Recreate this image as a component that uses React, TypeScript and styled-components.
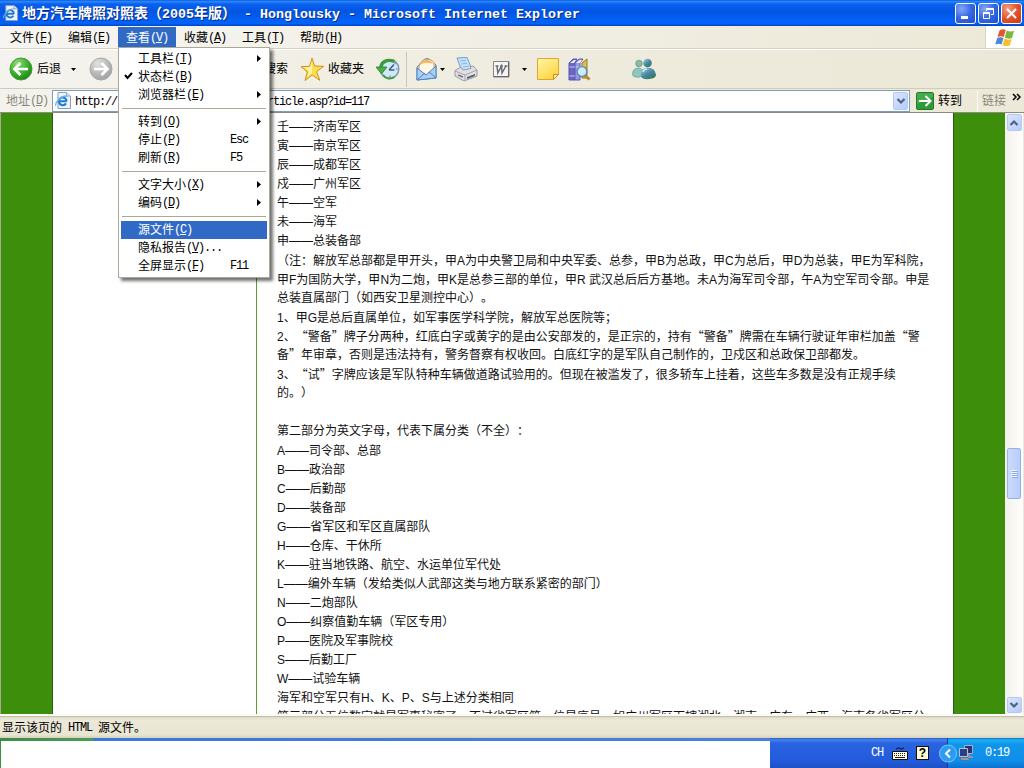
import React from 'react';
import styled, { createGlobalStyle, css } from 'styled-components';

const Global = createGlobalStyle`
  html, body { margin: 0; padding: 0; overflow: hidden; }
  * { box-sizing: border-box; }
  svg { display: block; flex: none; }
`;

const CJK = `"Noto Sans CJK SC", "Noto Sans", sans-serif`;

const Screen = styled.div`
  width: 1024px;
  height: 768px;
  display: flex;
  flex-direction: column;
  overflow: hidden;
  position: relative;
  background: #ece9d8;
  color: #000;
  font: 12px ${CJK};
  white-space: pre;
  text-spacing-trim: space-all;
`;

/* ---------- text ---------- */

const Mono = styled.span<{ $title?: boolean }>`
  font-family: "Liberation Mono", monospace;
  line-height: 1;
  ${(p) =>
    p.$title
      ? css`
          font-size: 13.33px;
        `
      : css`
          font-size: 12px;
          letter-spacing: -1.2px;
          vertical-align: 1px;
        `}
`;

const Arial = styled.span`
  font-family: "Liberation Sans", sans-serif;
`;

const Under = styled.span`
  text-decoration: underline;
  text-underline-offset: 1px;
`;

const runs = (text: string) => text.match(/[\x20-\x7e]+|[^\x20-\x7e]+/g) ?? [];
const articleRuns = (text: string) => text.match(/[\x20-\x7e—]+|[^\x20-\x7e—]+/g) ?? [];
const isLatin = (t: string) => /^[\x20-\x7e—]/.test(t);

const Ui = ({ children, title }: { children: string; title?: boolean }) => (
  <span>
    {runs(children).map((t, i) => {
      if (!isLatin(t)) return <span key={i}>{t}</span>;
      const key = t.match(/^\(([A-Z])\)(.*)$/);
      return (
        <Mono key={i} $title={title}>
          {key ? (
            <>
              (<Under>{key[1]}</Under>){key[2]}
            </>
          ) : (
            t
          )}
        </Mono>
      );
    })}
  </span>
);

/* ---------- title bar ---------- */

const TitleBar = styled.header`
  height: 26px;
  flex: none;
  display: flex;
  align-items: center;
  padding: 0 2px 0 3px;
  background: linear-gradient(#0a5be6 0, #2b86fb 6%, #0a60ee 16%, #0355e2 45%, #0360f6 75%, #0262fb 90%, #0144c4 100%);
`;

const Caption = styled.div`
  flex: 1;
  margin-left: 3px;
  padding-bottom: 1px;
  font-size: 14px;
  font-weight: 700;
  color: #fff;
  line-height: 23px;
  text-shadow: 1px 1px #0a2a80;
`;

const WinButton = styled.div<{ $close?: boolean }>`
  width: 21px;
  height: 21px;
  margin-left: 2px;
  border: 1px solid #fff;
  border-radius: 3px;
  display: grid;
  place-items: center;
  background: ${(p) =>
    p.$close
      ? 'radial-gradient(circle at 30% 25%, #f0a088, #e3532c 50%, #c43a14)'
      : 'radial-gradient(circle at 30% 25%, #84a8f6, #3566e0 50%, #1f4fd0)'};
`;

/* ---------- menu bar ---------- */

const MenuBar = styled.nav`
  height: 23px;
  flex: none;
  display: flex;
  padding-left: 2px;
  border-bottom: 1px solid #d6d2c2;
  background: linear-gradient(90deg, #f6f5f2, #efecdf 70%, #ece9d8);
`;

const MenuTop = styled.div<{ $open?: boolean }>`
  width: 58px;
  height: 21px;
  margin-top: 1px;
  padding-left: 8px;
  line-height: 19px;
  background: ${(p) => (p.$open ? '#316ac5' : 'transparent')};
  color: ${(p) => (p.$open ? '#fff' : '#000')};
`;

const Throbber = styled.div`
  width: 39px;
  height: 22px;
  margin-left: auto;
  display: grid;
  place-items: center;
  background: #fff;
  border-left: 1px solid #d8d4c4;
`;

/* ---------- toolbar ---------- */

const ToolBar = styled.div`
  height: 40px;
  flex: none;
  display: flex;
  align-items: center;
  border-top: 1px solid #fff;
  border-bottom: 1px solid #d0ccbc;
  background: linear-gradient(90deg, #f5f3ee, #efecdf 50%, #ebe8d7);
`;

const Tool = styled.div<{ $gap?: number; $width: number }>`
  width: ${(p) => p.$width}px;
  margin-left: ${(p) => p.$gap ?? 0}px;
  flex: none;
  line-height: 20px;
`;

const ToolLabel = styled(Tool)`
  padding-bottom: 2px;
`;

const ToolSeparator = styled.div`
  width: 1px;
  height: 35px;
  margin-left: 6px;
  background: #c9c5b4;
`;

/* ---------- address bar ---------- */

const AddressBar = styled.div`
  height: 24px;
  flex: none;
  display: flex;
  align-items: center;
  background: linear-gradient(90deg, #f4f2ec, #ece9d8);
  border-bottom: 1px solid #8d8b80;
`;

const AddressLabel = styled.div`
  width: 52px;
  padding: 0 0 2px 6px;
  line-height: 20px;
  color: #8a887c;
`;

const AddressField = styled.div`
  width: 858px;
  height: 22px;
  display: flex;
  align-items: center;
  padding: 0 1px 0 2px;
  border: 1px solid #7f9db9;
  background: #fff;
`;

const Url = styled.div`
  flex: 1;
  display: flex;
  margin-left: 3px;
`;

const BlueButton = styled.div<{ $w: number; $h: number }>`
  width: ${(p) => p.$w}px;
  height: ${(p) => p.$h}px;
  flex: none;
  display: grid;
  place-items: center;
  border: 1px solid #b4c8f6;
  border-radius: 2px;
  background: linear-gradient(135deg, #dbe6fe, #b6cbfa);
`;

const GoLabel = styled.div`
  width: 39px;
  height: 22px;
  margin-left: 4px;
  line-height: 20px;
`;

const Links = styled.div`
  flex: 1;
  height: 22px;
  display: flex;
  justify-content: space-between;
  padding: 0 3px 0 4px;
  line-height: 19px;
  color: #8a887c;
  border-left: 1px solid #fbfaf4;
`;

const More = styled.svg`
  margin-top: 3px;
`;

/* ---------- document ---------- */

const Viewport = styled.main`
  height: 601px;
  flex: none;
  display: flex;
  overflow: hidden;
  border-left: 1px solid #aca899;
  background: #3c8e0b;
`;

const Margin = styled.div<{ $w: number; $side: 'left' | 'right' }>`
  width: ${(p) => p.$w}px;
  flex: none;
  background: #3c8e0b;
  border-${(p) => (p.$side === 'left' ? 'right' : 'left')}: 1px solid #2b5c10;
`;

const Sidebar = styled.div`
  width: 204px;
  flex: none;
  background: #fff;
  border-right: 1px solid #5f9a30;
`;

const Article = styled.article`
  flex: 1;
  min-width: 0;
  padding: 3px 0 0 20px;
  overflow: hidden;
  background: #fff;
  color: #111;
`;

const Line = styled.div<{ $shift: number }>`
  height: 19px;
  line-height: 19px;
  margin-top: ${(p) => p.$shift}px;
`;

const ScrollBar = styled.div`
  width: 18px;
  flex: none;
  display: flex;
  flex-direction: column;
  align-items: center;
  padding: 1px 0;
  background: linear-gradient(90deg, #f3f1ec, #fefefb);
`;

const Thumb = styled.div`
  width: 14px;
  height: 51px;
  margin: 317px 0 auto;
  display: grid;
  place-items: center;
  border: 1px solid #98b0e8;
  border-radius: 2px;
  background: linear-gradient(90deg, #cbdafd, #b9cdfb);
`;

const Edge = styled.div`
  width: 1px;
  flex: none;
  background: #ece9d8;
`;

/* ---------- status bar, task bar ---------- */

const StatusBar = styled.footer`
  height: 24px;
  flex: none;
  padding: 1px 0 0 2px;
  line-height: 20px;
  border-top: 2px solid #fbfaf5;
  background: linear-gradient(#a9a594 0, #dedac8 1px, #ece9d8 4px, #e8e5d3 19px, #d3d0bf);
`;

const TaskBar = styled.div`
  height: 30px;
  flex: none;
  display: flex;
  background: linear-gradient(#2b62c8 0, #4382ee 2px, #2a63e0 5px, #235bdc 22px, #1f50c4);
`;

const TaskWindow = styled.div`
  width: 770px;
  height: 30px;
  border-top: 3px solid #4179d8;
  background: #fff;
  border-left: 1px solid #2f6a58;
  border-image: linear-gradient(90deg, #3f8d45 0, #4c9c55 92px, #3d78d8 95px, #4a80da) 3 0 0 1;
`;

const LanguageBar = styled.div`
  width: 177px;
  display: flex;
  align-items: center;
  color: #fff;
  padding-left: 101px;
`;

const Gap = styled.div<{ $w: number }>`
  width: ${(p) => p.$w}px;
  flex: none;
`;

const Tray = styled.div`
  flex: 1;
  display: flex;
  align-items: center;
  color: #fff;
  border-left: 1px solid #0b3c9a;
  background: linear-gradient(#1170c8 0, #19b3f4 2px, #1095ea 6px, #0f8eea 23px, #0c70cc);
`;

const TrayText = styled.div`
  padding-bottom: 3px;
`;

const TrayArrow = styled.div`
  margin-left: -9px;
  margin-right: 1px;
`;

/* ---------- drop-down menu ---------- */

const DropDown = styled.div`
  position: absolute;
  left: 118px;
  top: 47px;
  width: 152px;
  padding: 2px;
  border: 1px solid #aca899;
  background: #fff;
  box-shadow: 3px 3px 3px rgba(0, 0, 0, 0.55);
`;

const MenuRow = styled.div<{ $active?: boolean }>`
  height: 18px;
  display: grid;
  grid-template-columns: 17px 92px 27px 10px;
  align-items: center;
  padding-bottom: 2px;
  line-height: 16px;
  color: ${(p) => (p.$active ? '#fff' : '#000')};
  background: ${(p) => (p.$active ? '#316ac5' : 'transparent')};
`;

const MenuRule = styled.div`
  height: 1px;
  margin: 4px 1px;
  background: #aca899;
`;

/* ---------- icons ---------- */

const IeIcon = ({ size = 17 }: { size?: number }) => (
  <svg width={size} height={size} viewBox="0 0 17 17">
    <path d="M3 .5h8.5L15.5 4v12.5H3z" fill="#eef3fb" stroke="#8a9cba" />
    <path d="M11.5.5V4h4" fill="#dbe4f2" stroke="#8a9cba" strokeWidth=".8" />
    <path d="M11.7 9.3H4.3M11.6 9.2A3.9 3.9 0 1 0 11 11.4" fill="none" stroke="#237ad2" strokeWidth="2.1" />
    <path d="M1 13.8C-1 11 8 2.5 12.5 4.3" fill="none" stroke="#65b4ee" strokeWidth="1.3" />
  </svg>
);

const Down = () => (
  <svg width="5" height="3" viewBox="0 0 5 3">
    <path d="M0 0h5L2.5 3z" />
  </svg>
);

const Chevron = ({ up }: { up?: boolean }) => (
  <svg width="10" height="8" viewBox="0 0 10 8">
    <path d={up ? 'M1.5 6 5 2.5 8.5 6' : 'M1.5 2 5 5.5 8.5 2'} fill="none" stroke="#4d6185" strokeWidth="2.2" />
  </svg>
);

const Round = ({ gray }: { gray?: boolean }) => (
  <svg width="24" height="24" viewBox="0 0 24 24">
    <defs>
      <radialGradient id={gray ? 'rg' : 'rn'} cx=".35" cy=".25" r=".85">
        <stop offset="0" stopColor={gray ? '#e2e2e2' : '#92dc78'} />
        <stop offset=".5" stopColor={gray ? '#bdbdbd' : '#42b331'} />
        <stop offset="1" stopColor={gray ? '#9b9b9b' : '#1b7d15'} />
      </radialGradient>
    </defs>
    <circle cx="12" cy="12" r="11" fill={`url(#${gray ? 'rg' : 'rn'})`} stroke={gray ? '#aaa' : '#3d9a34'} />
    <path
      d={gray ? 'M5 12h13M12.5 6l6 6-6 6' : 'M19 12H6M11.5 6l-6 6 6 6'}
      fill="none"
      stroke="#fff"
      strokeWidth="2.7"
    />
  </svg>
);

const Star = () => (
  <svg width="25" height="25" viewBox="0 0 25 25">
    <path d="M12 1.2 14.7 9l9 .3-7.1 5.4 3.2 8.6-7.6-5.3-7.2 5.5 2.3-8.6L1 9.7l8.6-.4z" fill="#ffdc4b" stroke="#c79420" strokeLinejoin="round" />
    <path d="M12 4v12L7 20l2-6-5-3.5 6-.5z" fill="#fff3a4" />
  </svg>
);

const History = () => (
  <svg width="24" height="24" viewBox="0 0 24 24">
    <circle cx="13.5" cy="12" r="9.3" fill="#d3e8f7" stroke="#7f9fb4" strokeWidth="1.6" />
    <path d="m13 13 5-5.5M13 13h5.500" fill="none" stroke="#3c648c" strokeWidth="1.6" />
    <path d="M19 5.500V7M20 12h1.500M14 18.500V20" fill="none" stroke="#667" />
    <path d="M4.800 11C5 5 11 1.500 18.500 4.500" fill="none" stroke="#3a9a3d" strokeWidth="3.400" />
    <path d="M0 10h11l-5.500 7z" fill="#49b046" stroke="#267d2b" strokeWidth=".8" />
    <path d="M7 18c2.500 4 8 4.500 11.500 2" fill="none" stroke="#3f9d48" strokeWidth="2" />
  </svg>
);

const Mail = () => (
  <svg width="23" height="24" viewBox="0 0 23 24">
    <path d="M2 10 9 2.500q3-2 6 0L21 8v13L2 23z" fill="#bddcf8" stroke="#5d8cc2" />
    <path d="M4 10q2-8 9-7.500T19 9v5l-8 4-7-4z" fill="#fff8e8" stroke="#e3a04b" />
    <path d="M5 8q3-5 7-5t6 4q-7-3-13 1z" fill="#f5b65c" />
    <path d="m2 11 9 7 10-9v12L2 23z" fill="#a9d1f7" stroke="#4f80bd" strokeLinejoin="round" />
    <path d="m2 23 8-7M21 21l-7-6" stroke="#4f80bd" />
  </svg>
);

const Printer = () => (
  <svg width="24" height="25" viewBox="0 0 24 25">
    <path d="m3 1 10-.5 5 12-10 2z" fill="#c7e2fb" stroke="#6f9bd0" />
    <path d="m6 4 6-.5M7 7l6-.8M9 10l6-1" stroke="#88b4e2" />
    <path d="M1 13.500 7 10l2 3 8-1.500-1-2 3-.5 4 4v6l-13 5-9-5z" fill="#e0e0e4" stroke="#9a9aa4" strokeLinejoin="round" />
    <path d="m1 14 10 4 12-5M11 18v5" fill="none" stroke="#a4a4ae" />
    <path d="m13 20 8-3v2l-8 3z" fill="#5e6070" />
    <path d="m4 18 5 2" stroke="#777" strokeWidth="1.5" />
  </svg>
);

const Word = () => (
  <svg width="17" height="17" viewBox="0 0 17 17">
    <path d="M.5.5h15.500v15.500H.5z" fill="#f5f5f5" stroke="#85858a" />
    <path d="M1 15.500h15M15.500 1v15" stroke="#68686c" />
    <path d="M2.500 5h3M4 5l.8 7L8.500 5l.5 7L13 5M7 5h3M11.500 5h3" fill="none" stroke="#6c6c74" strokeWidth="1.500" />
  </svg>
);

const Note = () => (
  <svg width="22" height="22" viewBox="0 0 22 22">
    <defs>
      <linearGradient id="note" x2=".7" y2="1">
        <stop stopColor="#fff7aa" />
        <stop offset="1" stopColor="#ffd33e" />
      </linearGradient>
    </defs>
    <path d="M.5.5h21v16l-5 5H.5z" fill="url(#note)" stroke="#dfa927" />
    <path d="M16.500 21.500v-5h5z" fill="#fff2a0" stroke="#c98f14" />
  </svg>
);

const Books = () => (
  <svg width="23" height="23" viewBox="0 0 23 23">
    <path d="m1 5 4-4h4L7 5v17H1z" fill="#6a68c4" stroke="#5755ae" />
    <path d="m7 5 4-4h4l-3 4v17H7z" fill="#9a98e2" stroke="#5d5bb4" />
    <path d="m2 5 4-3h2L6 5zM8 5l4-3h2l-2 3z" fill="#f2f2fb" />
    <path d="m14 5 5-4v19h-5z" fill="#d9bd58" stroke="#97791e" />
    <path d="M1.500 9H7M8 9h4M1.500 18H7" stroke="#c6c5f5" />
    <path d="m17 17.500 4.500 4" stroke="#b98a28" strokeWidth="3" />
    <circle cx="14" cy="13.500" r="4.900" fill="#c9ecfb" stroke="#5a87b5" strokeWidth="1.300" />
  </svg>
);

const People = () => (
  <svg width="25" height="22" viewBox="0 0 25 22">
    <defs>
      <linearGradient id="pal" x2=".8" y2="1">
        <stop stopColor="#a7d5da" />
        <stop offset=".55" stopColor="#4886a5" />
        <stop offset="1" stopColor="#34764c" />
      </linearGradient>
    </defs>
    <circle cx="7" cy="5.500" r="3.300" fill="#86bda2" stroke="#4d8c75" strokeWidth=".6" />
    <path d="M.5 17q0-7 5.500-7t5 6l-3 3q-6 1-7.500-2z" fill="#8fc5ba" stroke="#5593a0" strokeWidth=".6" />
    <circle cx="15.500" cy="5" r="4.300" fill="url(#pal)" />
    <path d="M9 19q-1-9 6-9.500 8 0 9 7 0 3-4 4-8 2-11-1.500z" fill="url(#pal)" />
    <path d="M11 14q1-3 4-3" fill="none" stroke="#cdeef0" strokeWidth="1.500" />
  </svg>
);

const GoIcon = () => (
  <svg width="18" height="18" viewBox="0 0 18 18">
    <rect x=".5" y=".5" width="17" height="17" rx="1.500" fill="#2f9a38" stroke="#247a2c" />
    <path d="M1 1h16v4L1 12z" fill="#56b45c" opacity=".6" />
    <path d="M3 9h11M9.500 4l5 5-5 5" fill="none" stroke="#fff" strokeWidth="2" />
  </svg>
);

const WindowsFlag = () => (
  <svg width="20" height="19" viewBox="0 0 20 19">
    <path d="M4.500 2.500Q8 .2 10.700 2L8.800 9Q6 7.500 2.500 9z" fill="#e4572e" />
    <path d="M11.700 2.500q3.500 2 7.300.3L17 10q-4 1.500-7.200-.5z" fill="#7cb83d" />
    <path d="M2.200 10Q6 8.500 8.500 10l-2 6.500Q4 15 .2 16.500z" fill="#4a86dc" />
    <path d="M9.500 10.500q3.500 2 7.200.5l-2 6.500q-4 1.500-7.200-.5z" fill="#f6bf2d" />
  </svg>
);

const Keyboard = () => (
  <svg width="16" height="13" viewBox="0 0 16 13">
    <path d="M4 2.500q2-3 4-1t4-1" fill="none" stroke="#111" />
    <path d="M.5 4.500h15v8H.5z" fill="#fffbe0" stroke="#111" />
    <path d="M2 6.500h12M2 8.500h12" stroke="#222" strokeDasharray="1 1" />
    <path d="M3 10.500h10" stroke="#222" />
  </svg>
);

const HelpBox = styled.div`
  width: 13px;
  height: 14px;
  border: 1px solid #111;
  background: #fffbd2;
  color: #000;
  font: 700 12px/12px "Liberation Sans", sans-serif;
  text-align: center;
`;

const Network = () => (
  <svg width="16" height="16" viewBox="0 0 16 16">
    <path d="M6.500.5h8v8h-8z" fill="#26336e" stroke="#a6afcb" />
    <path d="M11 9v3h4" fill="none" stroke="#8c93a8" strokeWidth="2" />
    <path d="M1.500 3.500h8v8h-8z" fill="#2b3f85" stroke="#b9bfd0" />
    <path d="M2 13h8l2 2H3z" fill="#c3c3ca" stroke="#676b80" />
  </svg>
);

/* ---------- content ---------- */

const menuTitles = ['文件(F)', '编辑(E)', '查看(V)', '收藏(A)', '工具(T)', '帮助(H)'];

type Entry = { label: string; sub?: boolean; check?: boolean; keys?: string; active?: boolean } | null;

const entries: Entry[] = [
  { label: '工具栏(T)', sub: true },
  { label: '状态栏(B)', check: true },
  { label: '浏览器栏(E)', sub: true },
  null,
  { label: '转到(O)', sub: true },
  { label: '停止(P)', keys: 'Esc' },
  { label: '刷新(R)', keys: 'F5' },
  null,
  { label: '文字大小(X)', sub: true },
  { label: '编码(D)', sub: true },
  null,
  { label: '源文件(C)', active: true },
  { label: '隐私报告(V)...' },
  { label: '全屏显示(F)', keys: 'F11' },
];

const lines: [string, number?][] = [
  ['壬——济南军区'],
  ['寅——南京军区'],
  ['辰——成都军区'],
  ['戍——广州军区'],
  ['午——空军'],
  ['未——海军'],
  ['申——总装备部'],
  ['（注：解放军总部都是甲开头，甲A为中央警卫局和中央军委、总参，甲B为总政，甲C为总后，甲D为总装，甲E为军科院，', 1],
  ['甲F为国防大学，甲N为二炮，甲K是总参三部的单位，甲R 武汉总后后方基地。未A为海军司令部，午A为空军司令部。申是'],
  ['总装直属部门（如西安卫星测控中心）。', -1],
  ['1、甲G是总后直属单位，如军事医学科学院，解放军总医院等；', 1],
  ['2、“警备”牌子分两种，红底白字或黄字的是由公安部发的，是正宗的，持有“警备”牌需在车辆行驶证年审栏加盖“警'],
  ['备”年审章，否则是违法持有，警务督察有权收回。白底红字的是军队自己制作的，卫戍区和总政保卫部都发。', -1],
  ['3、“试”字牌应该是军队特种车辆做道路试验用的。但现在被滥发了，很多轿车上挂着，这些车多数是没有正规手续', 1],
  ['的。）', -1],
  [''],
  ['第二部分为英文字母，代表下属分类（不全）：'],
  ['A——司令部、总部', 1],
  ['B——政治部'],
  ['C——后勤部'],
  ['D——装备部'],
  ['G——省军区和军区直属部队'],
  ['H——仓库、干休所'],
  ['K——驻当地铁路、航空、水运单位军代处'],
  ['L——编外车辆（发给类似人武部这类与地方联系紧密的部门）'],
  ['N——二炮部队'],
  ['O——纠察值勤车辆（军区专用）'],
  ['P——医院及军事院校'],
  ['S——后勤工厂'],
  ['W——试验车辆'],
  ['海军和空军只有H、K、P、S与上述分类相同'],
  ['第三部分五位数字就是军事秘密了，不过省军区第一位是序号，如广州军区下辖湖北、湖南、广东、广西、海南各省军区分'],
];

export default function App() {
  return (
    <Screen lang="zh-CN">
      <Global />
      <TitleBar>
        <IeIcon size={16} />
        <Caption>
          <Ui title>地方汽车牌照对照表（2005年版） - Honglousky - Microsoft Internet Explorer</Ui>
        </Caption>
        <WinButton>
          <svg width="13" height="13">
            <path d="M2 9h7v3H2z" fill="#fff" />
          </svg>
        </WinButton>
        <WinButton>
          <svg width="13" height="13">
            <path d="M4.500 4V1.500h7v6H9M4.500 2.500h7M1.500 5.500h6v6h-6zM1.500 6.500h6" fill="none" stroke="#fff" />
          </svg>
        </WinButton>
        <WinButton $close>
          <svg width="13" height="13">
            <path d="m2 2 9 9m0-9-9 9" stroke="#fff" strokeWidth="2" />
          </svg>
        </WinButton>
      </TitleBar>

      <MenuBar>
        {menuTitles.map((m, i) => (
          <MenuTop key={m} $open={i === 2}>
            <Ui>{m}</Ui>
          </MenuTop>
        ))}
        <Throbber>
          <WindowsFlag />
        </Throbber>
      </MenuBar>

      <ToolBar>
        <Tool $gap={9} $width={24}><Round /></Tool>
        <ToolLabel $gap={4} $width={24}>后退</ToolLabel>
        <Tool $gap={10} $width={5}><Down /></Tool>
        <Tool $gap={13} $width={24}><Round gray /></Tool>
        <ToolLabel $gap={151} $width={24}>搜索</ToolLabel>
        <Tool $gap={12} $width={25}><Star /></Tool>
        <ToolLabel $gap={3} $width={36}>收藏夹</ToolLabel>
        <Tool $gap={12} $width={24}><History /></Tool>
        <ToolSeparator />
        <Tool $gap={8} $width={23}><Mail /></Tool>
        <Tool $gap={2} $width={5}><Down /></Tool>
        <Tool $gap={9} $width={24}><Printer /></Tool>
        <Tool $gap={15} $width={17}><Word /></Tool>
        <Tool $gap={12} $width={5}><Down /></Tool>
        <Tool $gap={10} $width={22}><Note /></Tool>
        <Tool $gap={9} $width={23}><Books /></Tool>
        <Tool $gap={41} $width={25}><People /></Tool>
      </ToolBar>

      <AddressBar>
        <AddressLabel><Ui>地址(D)</Ui></AddressLabel>
        <AddressField>
          <IeIcon />
          <Url>
            <Ui>http://</Ui>
            <Gap $w={150} />
            <Ui>rticle.asp?id=117</Ui>
          </Url>
          <BlueButton $w={15} $h={18}><Chevron /></BlueButton>
        </AddressField>
        <Gap $w={6} />
        <GoIcon />
        <GoLabel>转到</GoLabel>
        <Links>
          链接
          <More width="9" height="9" viewBox="0 0 9 9">
            <path d="m1 1 3 3-3 3M5 1l3 3-3 3" fill="none" stroke="#000" strokeWidth="1.500" />
          </More>
        </Links>
      </AddressBar>

      <Viewport>
        <Margin $w={52} $side="left" />
        <Sidebar />
        <Article>
          {lines.map(([text, shift], i) => (
            <Line key={i} $shift={shift ?? 0}>
              {articleRuns(text).map((t, j) => (isLatin(t) ? <Arial key={j}>{t}</Arial> : <span key={j}>{t}</span>))}
            </Line>
          ))}
        </Article>
        <Margin $w={52} $side="right" />
        <ScrollBar>
          <BlueButton $w={15} $h={17}><Chevron up /></BlueButton>
          <Thumb>
            <svg width="7" height="8">
              <path d="M0 .5h6M0 2.500h6M0 4.500h6M0 6.500h6" stroke="#f2f6ff" />
              <path d="M1 1.500h6M1 3.500h6M1 5.500h6M1 7.500h6" stroke="#8ca6e8" />
            </svg>
          </Thumb>
          <BlueButton $w={15} $h={16}><Chevron /></BlueButton>
        </ScrollBar>
        <Edge />
      </Viewport>

      <StatusBar>
        <Ui>显示该页的 HTML 源文件。</Ui>
      </StatusBar>

      <TaskBar>
        <TaskWindow />
        <LanguageBar>
          <TrayText><Ui>CH</Ui></TrayText>
          <Gap $w={9} />
          <Keyboard />
          <Gap $w={8} />
          <HelpBox>?</HelpBox>
        </LanguageBar>
        <Tray>
          <TrayArrow>
            <svg width="18" height="19" viewBox="0 0 18 19">
              <circle cx="9" cy="9.500" r="8.500" fill="#2e9bf2" stroke="#7cc9fa" />
              <path d="M11 5.500 7 9.500l4 4" fill="none" stroke="#fff" strokeWidth="2" />
            </svg>
          </TrayArrow>
          <Network />
          <Gap $w={11} />
          <TrayText><Ui>0:19</Ui></TrayText>
        </Tray>
      </TaskBar>

      <DropDown>
        {entries.map((e, i) =>
          e ? (
            <MenuRow key={i} $active={e.active}>
              <span>
                {e.check && (
                  <svg width="12" height="8">
                    <path d="m4 3 2.500 3L11 1" fill="none" stroke="#000" strokeWidth="2" />
                  </svg>
                )}
              </span>
              <Ui>{e.label}</Ui>
              <Ui>{e.keys ?? ''}</Ui>
              {e.sub && (
                <svg width="4" height="7">
                  <path d="M0 0v7l4-3.500z" />
                </svg>
              )}
            </MenuRow>
          ) : (
            <MenuRule key={i} />
          ),
        )}
      </DropDown>
    </Screen>
  );
}
